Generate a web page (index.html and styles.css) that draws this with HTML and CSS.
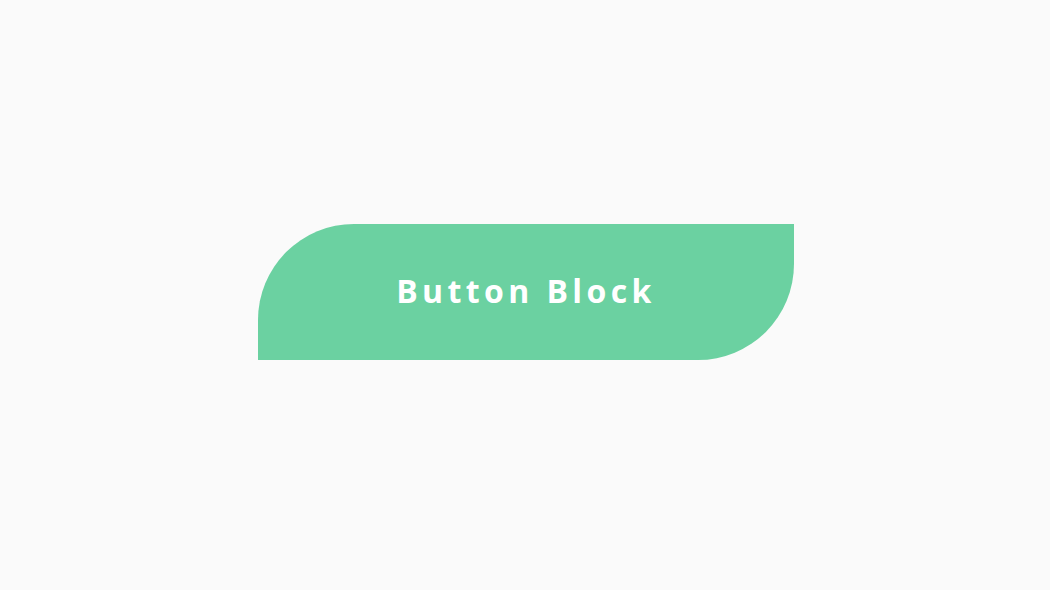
FILE: index.html
```html
<!DOCTYPE html>
<html lang="en">
<head>
<meta charset="utf-8">
<title>Button Block</title>
<link rel="stylesheet" href="styles.css">
</head>
<body>
<main class="stage">
  <button class="btn-block" type="button">Button Block</button>
</main>
</body>
</html>
```
FILE: styles.css
```css
html, body {
  margin: 0;
  padding: 0;
  background: #fafafa;
}

.stage {
  width: 1050px;
  height: 590px;
  box-sizing: border-box;
  padding: 0 0 6px 2px;
  display: flex;
  align-items: center;
  justify-content: center;
}

.btn-block {
  width: 536px;
  height: 136px;
  border: none;
  margin: 0;
  padding: 0 0 3px 0;
  background: #6bd1a1;
  color: #ffffff;
  border-radius: 96px 0 96px 0;
  font-family: "Open Sans", "Liberation Sans", sans-serif;
  font-weight: 700;
  font-size: 32px;
  letter-spacing: 4.4px;
  display: flex;
  align-items: center;
  justify-content: center;
  cursor: pointer;
}
```
